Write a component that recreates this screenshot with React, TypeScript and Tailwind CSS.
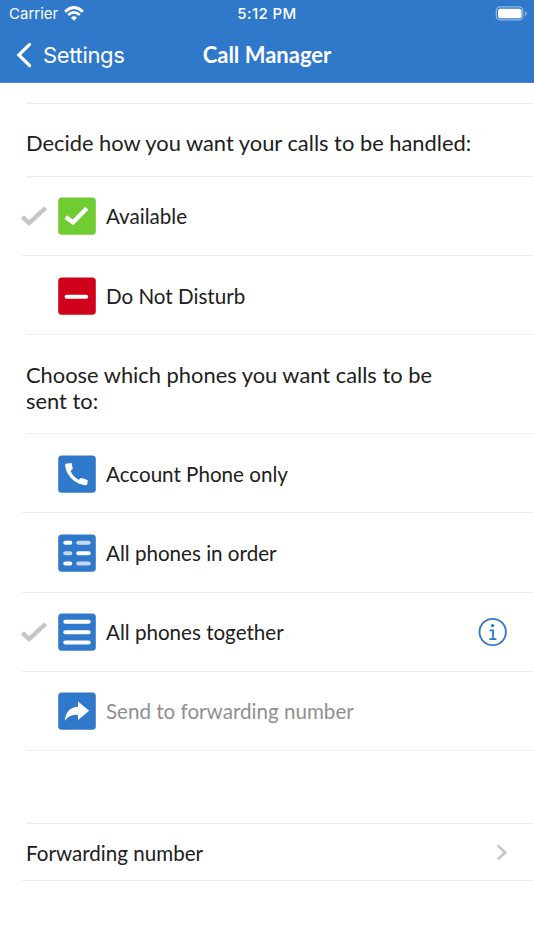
import type { ReactNode } from "react";

function Divider({ wide = false }: { wide?: boolean }) {
  return <div className={`h-px shrink-0 bg-[#ededed] ${wide ? "ml-[21px]" : "ml-[26px]"}`} />;
}

function CheckMark() {
  return (
    <svg className="h-[38px] w-[37px] shrink-0" viewBox="0 0 37 38" fill="none">
      <path d="M1.4 19.9L8.2 26.1L24.6 10.9" stroke="#c6c6c6" strokeWidth="4.4" />
    </svg>
  );
}

function Tile({ color, children }: { color: string; children: ReactNode }) {
  return (
    <svg className="h-[38px] w-[38px] shrink-0" viewBox="0 0 38 38" fill="none">
      <rect x="0.2" y="0.4" width="37.6" height="37.4" rx="3.6" fill={color} />
      {children}
    </svg>
  );
}

function Bar({ x, y, w, h = 4, dim = false }: { x: number; y: number; w: number; h?: number; dim?: boolean }) {
  return <rect x={x} y={y - h / 2} width={w} height={h} rx={h / 2} fill={dim ? "#c6d8ef" : "#fff"} />;
}

function InfoIcon() {
  return (
    <svg className="mr-[26px] ml-auto h-[30px] w-[30px]" viewBox="0 0 30 30" fill="none" stroke="#2f78ca">
      <circle cx="14.7" cy="15" r="13.2" strokeWidth="1.8" />
      <circle cx="14.5" cy="8.6" r="1.7" fill="#2f78ca" stroke="none" />
      <path d="M11.6 13.4H15V22M11.3 22.2H18.4" strokeWidth="1.8" />
    </svg>
  );
}

interface OptionProps {
  label: string;
  icon: ReactNode;
  selected?: boolean;
  disabled?: boolean;
  info?: boolean;
  className: string;
}

function Option({ label, icon, selected, disabled, info, className }: OptionProps) {
  return (
    <div className={`flex items-center pl-[21px] text-[20.6px] ${className}`}>
      {selected ? <CheckMark /> : <div className="w-[37px] shrink-0" />}
      {icon}
      <span className={`ml-[10px] whitespace-nowrap ${disabled ? "text-[#8f8f8f]" : ""}`}>{label}</span>
      {info && <InfoIcon />}
    </div>
  );
}

function Header() {
  return (
    <header className="h-[83px] border-b border-[#4889d2] bg-[#2f78ca] text-white">
      <div className="grid h-[27px] grid-cols-3 items-center font-['Inter',sans-serif] text-[15px] leading-[27px]">
        <div className="flex items-center pl-[9px]">
          <span className="w-[50px] whitespace-nowrap text-[15px]">Carrier</span>
          <svg className="ml-[5px] h-[16px] w-[20px]" viewBox="0 0 20 16" fill="none" stroke="#fff">
            <path d="M1.1 5.7Q10 -2.7 18.9 5.7" strokeWidth="2.9" />
            <path d="M4.2 9Q10 3.6 15.8 9" strokeWidth="2.7" />
            <path d="M10 14.8L6.9 11.8Q10 8.9 13.1 11.8Z" fill="#fff" stroke="none" />
          </svg>
        </div>
        <span className="text-center text-[15px] font-medium tracking-[0.4px]">5:12 PM</span>
        <svg className="mr-[6px] h-[16px] w-[33px] justify-self-end" viewBox="0 0 33 16" fill="none">
          <rect x="1.3" y="0.9" width="26.6" height="13" rx="3.8" stroke="#91b7e3" strokeWidth="1.3" />
          <rect x="3" y="2.7" width="23.5" height="9.5" rx="2" fill="#fff" />
          <path d="M30 5Q31.7 5.8 31.7 7.5Q31.7 9.2 30 10Z" fill="#91b7e3" />
        </svg>
      </div>
      <div className="grid h-[55px] grid-cols-3 items-center">
        <div className="flex items-center pl-[15px]">
          <svg className="h-[26px] w-[18px]" viewBox="0 0 18 26" fill="none">
            <path d="M14.6 2.4L3.8 13L14.6 23.6" stroke="#fff" strokeWidth="3.2" strokeLinecap="round" strokeLinejoin="miter" />
          </svg>
          <span className="ml-[10px] pt-px font-['Inter',sans-serif] text-[22px] tracking-[-0.35px]">Settings</span>
        </div>
        <h1 className="pt-px text-center text-[22px] font-bold whitespace-nowrap">Call Manager</h1>
      </div>
    </header>
  );
}

export default function App() {
  return (
    <div className="flex h-[950px] w-[534px] flex-col overflow-hidden bg-white font-['Lato',sans-serif] text-[21.87px] leading-[26px] text-[#202020]">
      <Header />
      <main className="flex flex-col pt-[20px]">
        <Divider />
        <p className="flex h-[72px] items-center pt-[6px] pl-[26px] whitespace-nowrap">
          Decide how you want your calls to be handled:
        </p>
        <Divider />
        <Option
          className="h-[78px]"
          label="Available"
          selected
          icon={
            <Tile color="#6fcd32">
              <path d="M7.7 19.9L15 25.4L28.9 11.3" stroke="#fff" strokeWidth="4.4" />
            </Tile>
          }
        />
        <Divider wide />
        <Option
          className="h-[78px] pt-[2px]"
          label="Do Not Disturb"
          icon={
            <Tile color="#d0021b">
              <Bar x={6.6} y={19.7} w={23.6} />
            </Tile>
          }
        />
        <Divider />
        <p className="h-[98px] pt-[27px] pl-[26px]">
          Choose which phones you want calls to be
          <br />
          sent to:
        </p>
        <Divider />
        <Option
          className="h-[78px] pt-[2px]"
          label="Account Phone only"
          icon={
            <Tile color="#2f78ca">
              <path
                d="M7.8 8.7L12.8 8Q13.6 8 13.8 8.8L14.7 13.2Q14.8 14 14.1 14.5L12.6 16Q14.6 21.3 20.6 24.7L22.5 23.2Q23 22.8 23.7 23.1L29 24.7Q29.8 25 29.8 25.8L29.3 29.3Q29.1 30.1 28.1 30.2C17.5 30.2 7 19.5 7.2 9.6Q7.2 8.9 7.8 8.7Z"
                fill="#fff"
              />
            </Tile>
          }
        />
        <Divider wide />
        <Option
          className="h-[79px] pt-px"
          label="All phones in order"
          icon={
            <Tile color="#2f78ca">
              <Bar x={5.3} y={8.8} w={9} />
              <Bar x={18.2} y={8.8} w={14.5} dim />
              <Bar x={5.3} y={19.2} w={9} dim />
              <Bar x={18.2} y={19.2} w={14.5} />
              <Bar x={5.3} y={29.6} w={9} />
              <Bar x={18.2} y={29.6} w={14.5} dim />
            </Tile>
          }
        />
        <Divider wide />
        <Option
          className="h-[78px]"
          label="All phones together"
          selected
          info
          icon={
            <Tile color="#2f78ca">
              <Bar x={5.3} y={8.8} w={27.4} />
              <Bar x={5.3} y={19.2} w={27.4} />
              <Bar x={5.3} y={29.6} w={27.4} />
            </Tile>
          }
        />
        <Divider wide />
        <Option
          className="h-[78px]"
          label="Send to forwarding number"
          disabled
          icon={
            <Tile color="#2f78ca">
              <path d="M20 9.6L31.2 18.8L20 28V22.9Q11.5 21.8 6.7 28.8Q8.2 15.4 20 14.7Z" fill="#fff" />
            </Tile>
          }
        />
        <Divider />
        <div className="h-[72px]" />
        <Divider />
        <div className="flex h-[56px] items-center pt-[2px] pl-[26px] text-[20.6px]">
          <span>Forwarding number</span>
          <svg className="mr-[25px] ml-auto h-[18px] w-[14px]" viewBox="0 0 14 18" fill="none">
            <path d="M2.7 1.5L10.2 8.4L2.7 15.3" stroke="#c4c4c4" strokeWidth="2.6" />
          </svg>
        </div>
        <Divider wide />
      </main>
    </div>
  );
}
